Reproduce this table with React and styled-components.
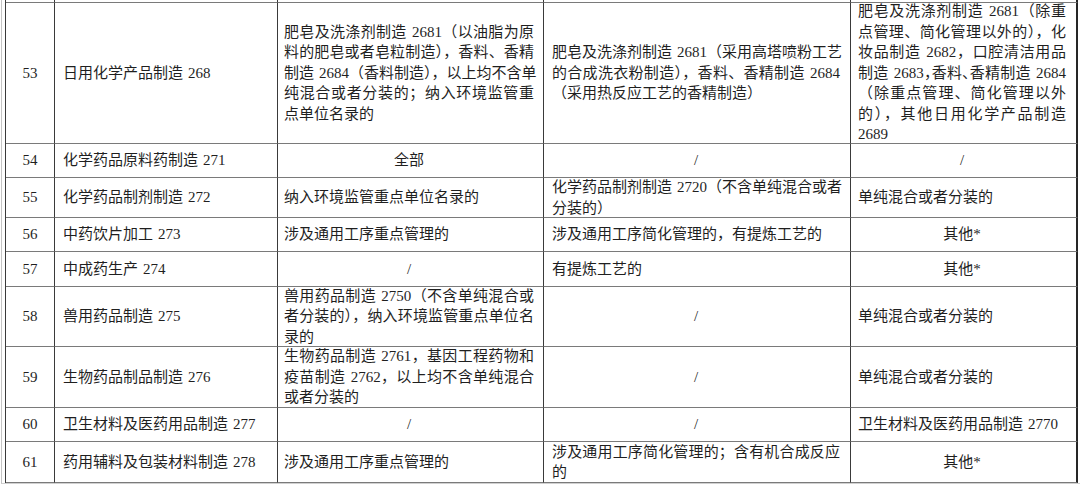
import React from "react";
import styled, { createGlobalStyle } from "styled-components";

const GlobalStyle = createGlobalStyle`
  html, body { margin: 0; padding: 0; background: #ffffff; }
  body {
    font-family: "Liberation Serif", "Noto Sans CJK SC", serif;
    color: #222222;
  }
`;

const Page = styled.div`
  width: 1080px;
  height: 485px;
  overflow: hidden;
  padding-left: 1px;
  box-sizing: border-box;
  background: #ffffff;
`;

const Frame = styled.div`
  border-left: 1px solid #c4c4c4;
  padding-left: 3px;
  height: 484px;
  border-bottom: 1px solid #d0d0d0;
  box-sizing: border-box;
`;

const Table = styled.div`
  display: grid;
  grid-template-columns: 49px 223px 266px 307px 227px;
  grid-template-rows: 3px 141px 34px 40px 34px 35px 60px 61px 34px 41px;
  border-left: 1px solid #3a3a3a;
  width: fit-content;
  font-size: 15px;
  line-height: 20.5px;
  word-spacing: 0.08em;
`;

const Cell = styled.div`
  display: flex;
  flex-direction: column;
  justify-content: center;
  box-sizing: border-box;
  min-width: 0;
  min-height: 0;
  padding: ${(p) => p.$pad};
  text-align: ${(p) => p.$align};
  border-right: ${(p) => (p.$lastCol ? "2px solid #262626" : "1px solid #3a3a3a")};
  border-bottom: 1px solid #7a7a7a;
  color: #1f1f1f;
`;

const Line = styled.span`
  display: block;
  white-space: nowrap;
  text-align-last: ${(p) => (p.$justify ? "justify" : "auto")};
  font-feature-settings: ${(p) => (p.$tight ? '"halt"' : "normal")};
`;

const PADS = ["0 2px", "0 8px", "0 9px 0 6px", "0 10px 0 8px", "0 10px 0 7px"];

const C = (text, align = "left") => ({ text, align });

// lines starting with "~" get tightened punctuation
const rows = [
  [
    C("53", "center"),
    C(["日用化学产品制造 268"]),
    C([
      "肥皂及洗涤剂制造 2681（以油脂为原",
      "料的肥皂或者皂粒制造），香料、香精",
      "制造 2684（香料制造），以上均不含单",
      "纯混合或者分装的；纳入环境监管重",
      "点单位名录的",
    ]),
    C([
      "肥皂及洗涤剂制造 2681（采用高塔喷粉工艺",
      "的合成洗衣粉制造），香料、香精制造 2684",
      "（采用热反应工艺的香精制造）",
    ]),
    C([
      "肥皂及洗涤剂制造 2681（除重",
      "点管理、简化管理以外的），化",
      "妆品制造 2682，口腔清洁用品",
      "~制造 2683，香料、香精制造 2684",
      "（除重点管理、简化管理以外",
      "的），其他日用化学产品制造",
      "2689",
    ]),
  ],
  [
    C("54", "center"),
    C(["化学药品原料药制造 271"]),
    C("全部", "center"),
    C("/", "center"),
    C("/", "center"),
  ],
  [
    C("55", "center"),
    C(["化学药品制剂制造 272"]),
    C(["纳入环境监管重点单位名录的"]),
    C(["化学药品制剂制造 2720（不含单纯混合或者", "分装的）"]),
    C(["单纯混合或者分装的"]),
  ],
  [
    C("56", "center"),
    C(["中药饮片加工 273"]),
    C(["涉及通用工序重点管理的"]),
    C(["涉及通用工序简化管理的，有提炼工艺的"]),
    C("其他*", "center"),
  ],
  [
    C("57", "center"),
    C(["中成药生产 274"]),
    C("/", "center"),
    C(["有提炼工艺的"]),
    C("其他*", "center"),
  ],
  [
    C("58", "center"),
    C(["兽用药品制造 275"]),
    C([
      "兽用药品制造 2750（不含单纯混合或",
      "者分装的），纳入环境监管重点单位名",
      "录的",
    ]),
    C("/", "center"),
    C(["单纯混合或者分装的"]),
  ],
  [
    C("59", "center"),
    C(["生物药品制品制造 276"]),
    C([
      "生物药品制造 2761，基因工程药物和",
      "疫苗制造 2762，以上均不含单纯混合",
      "或者分装的",
    ]),
    C("/", "center"),
    C(["单纯混合或者分装的"]),
  ],
  [
    C("60", "center"),
    C(["卫生材料及医药用品制造 277"]),
    C("/", "center"),
    C("/", "center"),
    C(["卫生材料及医药用品制造 2770"]),
  ],
  [
    C("61", "center"),
    C(["药用辅料及包装材料制造 278"]),
    C(["涉及通用工序重点管理的"]),
    C(["涉及通用工序简化管理的；含有机合成反应", "的"]),
    C("其他*", "center"),
  ],
];

function CellContent({ text }) {
  const lines = Array.isArray(text) ? text : [text];
  return lines.map((l, i) => {
    const tight = l.startsWith("~");
    return (
      <Line
        key={i}
        $tight={tight}
        $justify={lines.length > 1 && i < lines.length - 1}
      >
        {tight ? l.slice(1) : l}
      </Line>
    );
  });
}

export default function App() {
  return (
    <>
      <GlobalStyle />
      <Page>
        <Frame>
          <Table>
            {PADS.map((p, i) => (
              <Cell key={`top-${i}`} $pad="0" $align="left" $lastCol={i === 4} />
            ))}
            {rows.map((row, r) =>
              row.map((cell, c) => (
                <Cell
                  key={`${r}-${c}`}
                  $pad={PADS[c]}
                  $align={cell.align}
                  $lastCol={c === 4}
                >
                  <CellContent text={cell.text} />
                </Cell>
              ))
            )}
          </Table>
        </Frame>
      </Page>
    </>
  );
}
